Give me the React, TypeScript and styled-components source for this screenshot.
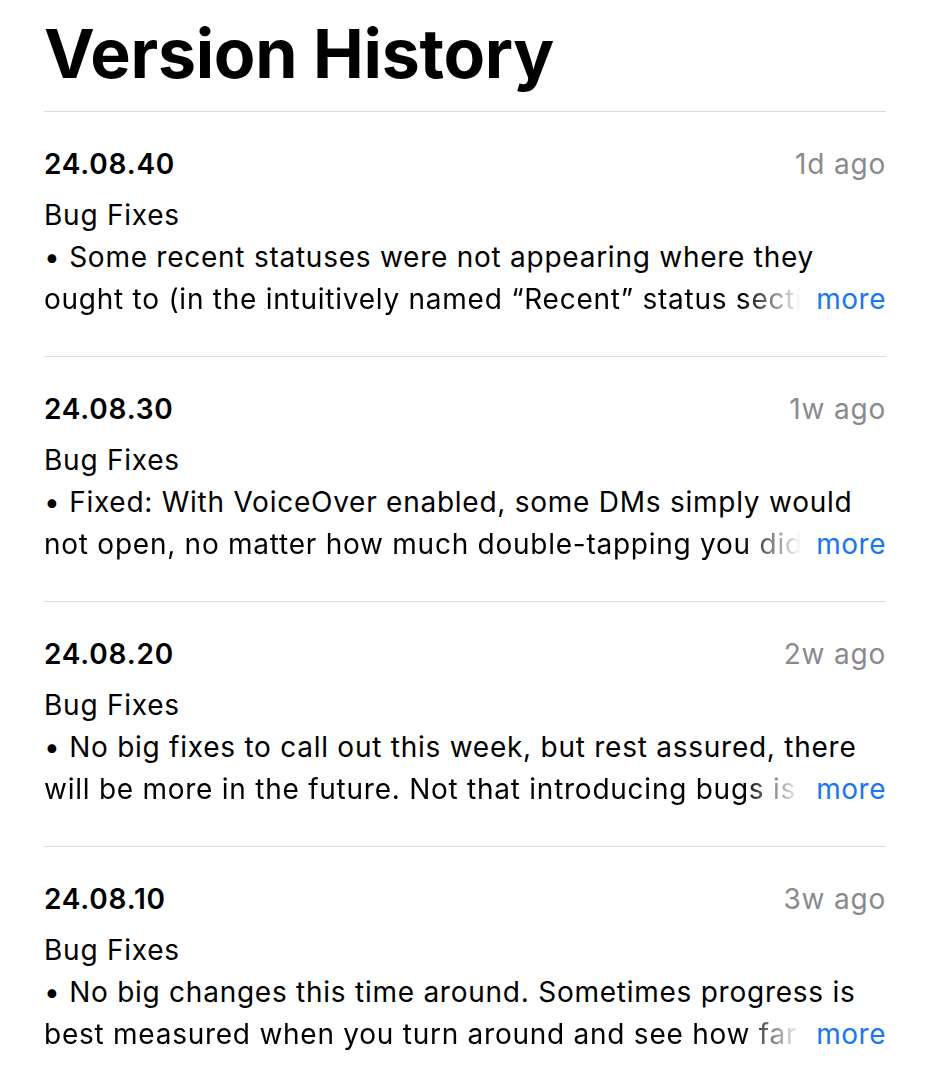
import React from "react";
import styled, { createGlobalStyle } from "styled-components";

interface Release {
  version: string;
  ago: string;
  title: string;
  lines: [string, string];
}

const releases: Release[] = [
  {
    version: "24.08.40",
    ago: "1d ago",
    title: "Bug Fixes",
    lines: [
      "• Some recent statuses were not appearing where they",
      "ought to (in the intuitively named “Recent” status section of the app).",
    ],
  },
  {
    version: "24.08.30",
    ago: "1w ago",
    title: "Bug Fixes",
    lines: [
      "• Fixed: With VoiceOver enabled, some DMs simply would",
      "not open, no matter how much double-tapping you did on them.",
    ],
  },
  {
    version: "24.08.20",
    ago: "2w ago",
    title: "Bug Fixes",
    lines: [
      "• No big fixes to call out this week, but rest assured, there",
      "will be more in the future. Not that introducing bugs is the plan.",
    ],
  },
  {
    version: "24.08.10",
    ago: "3w ago",
    title: "Bug Fixes",
    lines: [
      "• No big changes this time around. Sometimes progress is",
      "best measured when you turn around and see how far you have come.",
    ],
  },
];

const GlobalStyle = createGlobalStyle`
  html, body {
    margin: 0;
    padding: 0;
    background: #ffffff;
  }
  body {
    font-family: Inter, "Noto Sans", "Liberation Sans", sans-serif;
    color: #000000;
    -webkit-font-smoothing: antialiased;
  }
`;

const Page = styled.main`
  padding: 0 44px;
`;

const Title = styled.h1`
  margin: 0;
  padding-top: 13px;
  height: 98px;
  font-size: 68px;
  line-height: 80px;
  font-weight: 700;
  letter-spacing: -0.3px;
`;

const List = styled.ul`
  list-style: none;
  margin: 0;
  padding: 0;
  border-top: 1px solid #dcdcdf;
`;

const Item = styled.li`
  padding: 31px 0 36px;
  border-bottom: 1px solid #dcdcdf;
  &:last-child {
    border-bottom: none;
  }
`;

const Header = styled.div`
  display: flex;
  justify-content: space-between;
  align-items: center;
  height: 42px;
  margin-bottom: 9px;
`;

const Version = styled.span`
  font-size: 28px;
  font-weight: 600;
  letter-spacing: 0.8px;
`;

const Ago = styled.span`
  font-size: 28px;
  letter-spacing: 0.8px;
  color: #8a8a8e;
`;

const Line = styled.div`
  display: flex;
  font-size: 28px;
  letter-spacing: 0.75px;
  line-height: 42px;
  height: 42px;
  white-space: nowrap;
  overflow: hidden;
`;

const Faded = styled.span`
  flex: 1;
  min-width: 0;
  overflow: hidden;
  mask-image: linear-gradient(
    to right,
    #000 calc(100% - 64px),
    transparent calc(100% - 6px)
  );
`;

const More = styled.span`
  flex: none;
  margin-left: 9px;
  color: #1877f2;
  letter-spacing: 0.5px;
`;

export default function App() {
  return (
    <>
      <GlobalStyle />
      <Page>
        <Title>Version History</Title>
        <List>
          {releases.map((r) => (
            <Item key={r.version}>
              <Header>
                <Version>{r.version}</Version>
                <Ago>{r.ago}</Ago>
              </Header>
              <Line>{r.title}</Line>
              <Line>{r.lines[0]}</Line>
              <Line>
                <Faded>{r.lines[1]}</Faded>
                <More>more</More>
              </Line>
            </Item>
          ))}
        </List>
      </Page>
    </>
  );
}
